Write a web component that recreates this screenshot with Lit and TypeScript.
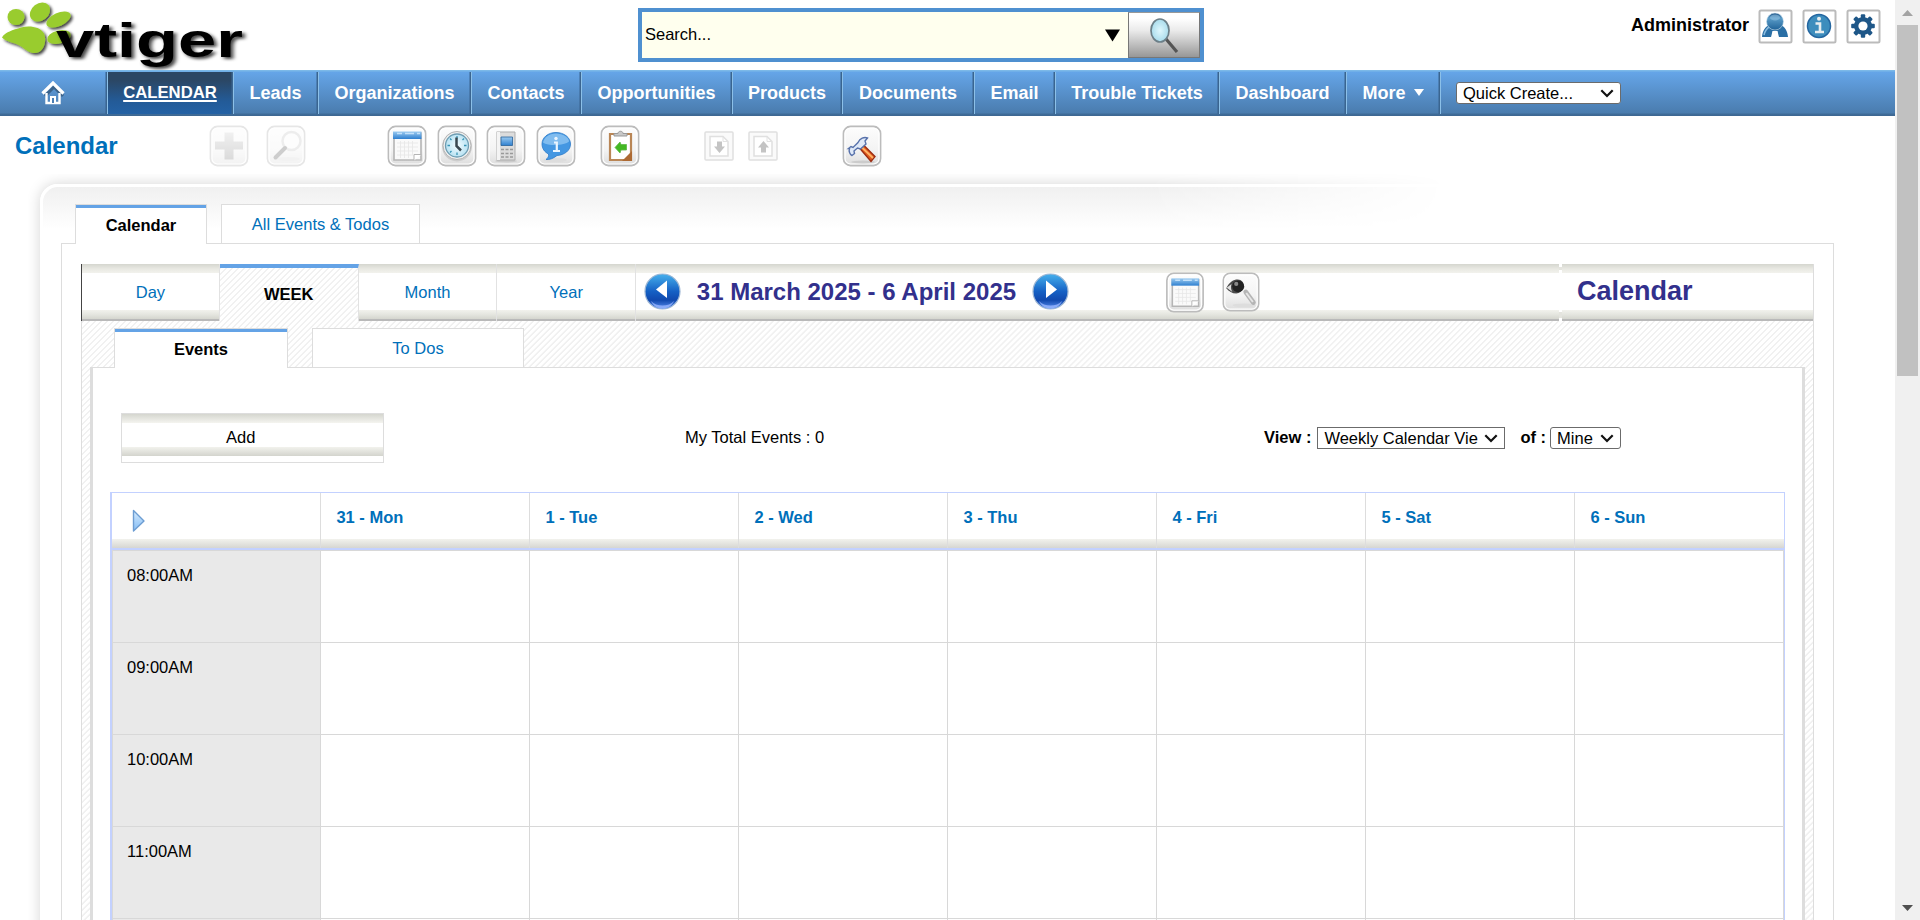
import { LitElement, html, css, svg } from "lit";
import { customElement } from "lit/decorators.js";
import { classMap } from "lit/directives/class-map.js";

const MODULES: [string, number][] = [
  ["CALENDAR", 126],
  ["Leads", 85],
  ["Organizations", 153],
  ["Contacts", 110],
  ["Opportunities", 151],
  ["Products", 110],
  ["Documents", 132],
  ["Email", 81],
  ["Trouble Tickets", 164],
  ["Dashboard", 127],
  ["More", 94],
];
const DAYS = ["31 - Mon", "1 - Tue", "2 - Wed", "3 - Thu", "4 - Fri", "5 - Sat", "6 - Sun"];
const HOURS = ["08:00AM", "09:00AM", "10:00AM", "11:00AM", ""];

const chevron = html`<svg class="chev" width="14" height="9" viewBox="0 0 14 9"><path d="M1.3 1.3L7 7l5.700-5.700" fill="none" stroke="#111" stroke-width="2.200"/></svg>`;

// Rounded glossy tile shared by the toolbar icons; `art` is drawn on a 40x42 grid.
const tile = (art: unknown, w = 40, h = 42) => html`<svg width=${w} height=${h} viewBox="0 0 40 42">
  <defs>
    <linearGradient id="t" x1="0" y1="0" x2="0" y2="1"><stop offset="0" stop-color="#fdfdfd"/><stop offset=".6" stop-color="#f3f3f3"/><stop offset="1" stop-color="#dcdcdc"/></linearGradient>
    <linearGradient id="b" x1="0" y1="0" x2="0" y2="1"><stop offset="0" stop-color="#9ccbf0"/><stop offset="1" stop-color="#2f80d0"/></linearGradient>
    <linearGradient id="g" x1="0" y1="0" x2="0" y2="1"><stop offset="0" stop-color="#d8d8d8"/><stop offset="1" stop-color="#9c9c9c"/></linearGradient>
    <radialGradient id="c"><stop offset="0" stop-color="#f4fcff"/><stop offset="1" stop-color="#b8e2f2"/></radialGradient>
  </defs>
  <rect x="1.500" y="1.500" width="37" height="39" rx="7" fill="url(#t)" stroke="#bcbcbc" stroke-width="1.800"/>
  <rect x="3" y="3" width="34" height="36" rx="5.500" fill="none" stroke="#fff" stroke-width="1.200"/>
  ${art}</svg>`;

const plusArt = svg`<path d="M15.500 7.500h9v9h9.500v8h-9.500v10h-9v-10H6v-8h9.500z" fill="url(#g)"/>`;
const searchArt = svg`<ellipse cx="22" cy="34" rx="12" ry="2" fill="#ddd"/><circle cx="25.500" cy="16" r="9" fill="#fafafa" stroke="#cfcfcf" stroke-width="2.500"/><path d="M19 23L9.500 32.500" stroke="#777" stroke-width="4" stroke-linecap="round"/>`;
const calArt = svg`<path d="M7 8h27v27H7z" fill="#fafafa" stroke="#b5b5b5" stroke-width="1.600"/><path d="M6 6.500h28.500V14H6z" fill="url(#b)"/><path d="M10 8.500h5m3 0h9m3 0h3" stroke="#c3e1fa" stroke-width="1.500"/><path d="M10 18h21m-21 4h21m-21 4h21m-21 4h16M13.500 16v17m4-17v17m4-17v17m4-17v14" stroke="#e6e6e6" stroke-width=".8"/><path d="M27 35.500v-6h7.500" fill="#fff" stroke="#b5b5b5"/>`;
const clockArt = svg`<circle cx="20" cy="21.500" r="15" fill="#cdcdcd"/><circle cx="20" cy="20.500" r="14" fill="#efefef" stroke="#b5b5b5"/><circle cx="20" cy="20.500" r="11.500" fill="url(#c)" stroke="#6e9db2" stroke-width="1.300"/><path d="M20 11v2.500m0 14V30M10.500 20.500H13m14 0h2.500M13 13.500l1.500 1.500M13 27.500l1.500-1.500M27 13.500L25.500 15" stroke="#3894b5" stroke-width="1.300"/><path d="M19.500 12.500v8.500l4.500 4.500" fill="none" stroke="#3a4850" stroke-width="2.500"/>`;
const phoneArt = svg`<ellipse cx="20" cy="36" rx="11" ry="1.500" fill="#ccc"/><path d="M10.500 7h18.500v28h-18.500z" fill="#dcdcdc" stroke="#adadad"/><path d="M10.500 7h3.500v28h-3.500z" fill="#f4f4f4"/><path d="M15 12h11.500v8.500H15z" fill="url(#b)" stroke="#2a6299" stroke-width=".8"/><path d="M15 24.500h3m1.500 0h3m1.500 0h3M15 28.500h3m1.500 0h3m1.500 0h3M15 32h3m1.500 0h3m1.500 0h3" stroke="#999" stroke-width="1.500"/>`;
const chatArt = svg`<ellipse cx="19" cy="35" rx="12" ry="2" fill="#ddd"/><path d="M20 7.500c8 0 14.500 5 14.500 11.500S28.500 30 21 30.500c-3.500 3-8 4.500-11 4 2-1.500 3-3 2.500-5.500C8.500 27 6 23.500 6 19 6 12.500 12 7.500 20 7.500z" fill="#4497e2" stroke="#2a79c8" stroke-width=".8"/><path d="M20 8.500c7 0 13 4 13 8-4 4-20 5-26 1 1-5 6-9 13-9z" fill="#a9d5f8" opacity=".6"/><path d="M18 17.500h2.800v8.500m-3.800 0h7" fill="none" stroke="#eaf5ff" stroke-width="2.200"/><circle cx="20" cy="13.500" r="1.700" fill="#eaf5ff"/>`;
const clipArt = svg`<path d="M10 9h21v26H10z" fill="#fff" stroke="#b98656" stroke-width="2.200"/><path d="M22 36l10-10v10z" fill="#ad6a34"/><path d="M14 11V8.500h4c0-3 5-3 5 0h4V11z" fill="#c8c8c8" stroke="#999"/><path d="M15 22.500l5-5.500 1 2.500h5.500v5.500H21l-1 3z" fill="#43b822" stroke="#5fb84a" stroke-width=".8"/>`;
const hammerArt = svg`<ellipse cx="21" cy="37" rx="12" ry="1.500" fill="#ccc"/><path d="M17.500 23l3.500-3.500L33 31.500 29 36.500z" fill="#df5a1e" stroke="#9b2c12" stroke-width="1.400"/><path d="M20 22.500L31 33" stroke="#ffb468" stroke-width="1.800"/><path d="M6.500 23.500l2.500-2 2 1 5-5c2-4 6-6 9.500-4.500L23 16l1 3-5.500 5-3-1-3.500 3 .5 2.500-2.500 2c-2-1-3.500-4-2.500-7z" fill="#dfe9f8" stroke="#5872ab" stroke-width="1.400"/>`;
const eyeArt = svg`<ellipse cx="23" cy="35" rx="12" ry="2" fill="#ddd"/><path d="M25 21l8 11" stroke="#b5b5b5" stroke-width="5" stroke-linecap="round"/><path d="M25.500 22l7 9.500" stroke="#e6e6e6" stroke-width="2"/><path d="M4.500 17C8 10.500 12 8 16.500 8s6 3 7 8c-3 4.500-5 6.500-8.500 6.500-4.500 0-7.500-2-10.500-5.500z" fill="#4a4a4a"/><path d="M5 16.500l5-4c-1 3-.5 6 1 8.500z" fill="#ddd"/><circle cx="17" cy="15" r="6.200" fill="#222"/><circle cx="15" cy="12.500" r="2.200" fill="#888"/>`;

const fileArt = (up: boolean) => html`<svg width="30" height="30" viewBox="0 0 30 30"><rect x="1" y="1" width="28" height="28" rx="1" fill="#fafafa" stroke="#e0e0e0" stroke-width="1.500"/><path d="M6 5.500h13l5 5V25H6z" fill="#fff" stroke="#e0e0e0" stroke-width="1.500"/><path d="M19 5.500v5h5" fill="none" stroke="#e2e2e2"/><path transform=${up ? "rotate(180 15.5 16)" : ""} d="M13 10.500h5v5h3L15.500 22 10 15.500h3z" fill="#c4c4c4"/></svg>`;

const arrowBall = (next: boolean) => html`<svg width="37" height="39" viewBox="0 0 37 39"><defs><linearGradient id="ab" x1="0" y1="0" x2="0" y2="1"><stop offset="0" stop-color="#46b0ec"/><stop offset=".5" stop-color="#1560c4"/><stop offset=".75" stop-color="#1149ae"/><stop offset="1" stop-color="#5a8ff0"/></linearGradient></defs><circle cx="18.500" cy="19.500" r="17.500" fill="url(#ab)" stroke="#9db6d4" stroke-width="1.200"/><path d="M7 29c5 6 18 6 23 0-4 10-19 10-23 0z" fill="#9bb8ff" opacity=".8"/><path transform=${next ? "translate(37 0) scale(-1 1)" : ""} d="M12 17.500L23 8.500v17.500z" fill="#fff"/></svg>`;

@customElement("app-root")
export class AppRoot extends LitElement {
  static styles = css`
    :host { display: flex; height: 920px; overflow: hidden; background: #fff; color: #000; font: 16.5px "Liberation Sans", Arial, sans-serif; }
    * { box-sizing: border-box; }
    svg { display: block; flex: none; }
    .page { width: 1895px; height: 920px; overflow: hidden; }
    .scroll { width: 25px; background: #f0f0f0; display: flex; flex-direction: column; align-items: center; justify-content: space-between; padding: 10px 0 9px; }
    .thumb { width: 21px; height: 351px; background: #c1c1c1; margin: 9px 0 auto; }
    header { display: flex; height: 70px; align-items: flex-start; }
    .logo { width: 638px; }
    .search { display: flex; width: 566px; height: 54px; border: 4px solid #4f90d0; margin-top: 8px; }
    .field { flex: 1; background: #ffffee; display: flex; align-items: center; justify-content: space-between; padding: 0 8px 1px 3px; }
    .tri { margin-top: 2px; }
    .field span { margin-bottom: 1px; }
    .go { width: 72px; border: 1px solid #777; border-top-color: #999; background: linear-gradient(#fff 12%, #eaeaea 40%, #979797); padding: 4px 0 0 20px; }
    .user { margin-left: auto; display: flex; padding: 9px 14px 0 0; font: bold 18px "Liberation Sans", Arial, sans-serif; }
    .user span { margin: 6px 9px 0 0; line-height: 21px; }
    .user svg + svg { margin-left: 9px; }
    nav { display: flex; height: 46px; padding-top: 2px; background: linear-gradient(#7cb9e8 0 1px, #65a5e8 2px, #4a7cae 43px, #3f6c98 44px, #3e6791); color: #fff; font: bold 18px "Liberation Sans", Arial, sans-serif; }
    .cell { height: 42px; border-right: 1px solid #8cc0e8; box-shadow: inset -1.500px 0 0 #3a6590; display: flex; align-items: center; justify-content: center; padding-right: 1px; }
    .home { width: 108px; padding-right: 2px; }
    .item.on { height: 42px; background: linear-gradient(#2b4765 20%, #235b98 70%, #2462a5); font-size: 16.7px; text-decoration: underline; text-decoration-thickness: 1.5px; text-underline-offset: 2px; }
    .more { margin: 0 0 1px 8px; }
    .select { display: flex; align-items: center; justify-content: space-between; background: #fff; color: #000; border: 1px solid #6b6b6b; height: 22px; padding: 0 6px 0 6px; font: 16.5px "Liberation Sans", Arial, sans-serif; white-space: nowrap; }
    .quick { width: 165px; border-radius: 3px; margin: 10px 0 0 15px; }
    .tools { display: flex; height: 58px; padding: 9px 0 0 15px; }
    .tools h1 { font-size: 24px; line-height: 41px; margin: 0; width: 194px; }
    h1 { color: #0070ba; }
    .faint { opacity: .36; margin-right: 17px; }
    .g1 { margin-left: 64px; display: flex; gap: 9.600px; }
    .g2 { margin-left: 24px; }
    .g3 { margin: 6px 0 0 64px; display: flex; gap: 14px; }
    .g4 { margin-left: 64px; }
    .frame { margin-left: 28px; height: 746px; padding: 10px 0 0 12px; display: grid; }
    .glow, .inner { grid-area: 1 / 1; height: 750px; }
    .glow { border: solid #fff; border-width: 3px 0 0 3px; border-radius: 18px 0 0 0; background: linear-gradient(#f0f0f0, #fff 42px); box-shadow: 0 0 14px rgba(0, 0, 0, .17); mask: linear-gradient(90deg, #000 60%, transparent 76%) -12px -10px / calc(100% + 12px) 800px no-repeat; mask-clip: no-clip; }
    .inner { padding: 20px 61px 0 21px; z-index: 1; }
    .tabs { display: flex; height: 39px; }
    .tab { height: 39px; border: 1px solid #ddd; border-bottom: 0; background: #fff; display: flex; justify-content: center; padding-top: 10px; line-height: 19px; color: #0070ba; }
    .tab.on { color: #000; font-weight: bold; box-shadow: inset 0 3px #64a3e6; height: 40px; padding-top: 11px; z-index: 1; }
    .outer { border: 1px solid #ddd; border-bottom: 0; background: #fff; height: 680px; padding: 20px 19px 0; }
    .tabs.top { padding-left: 14px; gap: 14px; }
    .t1 { width: 132px; } .t2 { width: 199px; }
    .hatch { height: 660px; border: solid #ddd; border-width: 0 1px; background: repeating-linear-gradient(135deg, #fff 0 2.200px, #f1f1f1 2.800px 3.800px, #fff 4.240px); }
    .bar { display: flex; height: 57px; }
    .band { background: linear-gradient(#d5d6cf, #e9e9e3 5px, #f2f2ed 9px, #fff 9px 46px, #f2f2ed 46px, #e6e7e1 50px, #d3d4cd 55.500px, #b9b9b9 55.500px); display: flex; }
    .view { width: 138.8px; justify-content: center; padding-top: 18px; line-height: 20px; color: #0070ba; border-right: 1px solid #e2e2e2; }
    .first { margin-left: -1px; border-left: 1px solid #444; }
    .view.on { background: none; border-top: 4px solid #64a3e6; font-weight: bold; color: #000; padding-top: 16px; }
    .date { width: 922.8px; padding: 8px 0 0 7.6px; }
    .date b { font-size: 24px; line-height: 40px; color: #32308c; width: 319px; margin: 0 16px; white-space: nowrap; }
    .gap { width: 3px; background: linear-gradient(#fff 3px, #e4e4de 3px 6px, #fff 6px 48px, #e4e4de 48px 54px, #fff 54px); }
    .side { flex: 1; padding: 8px 0 0 15px; font: bold 27px/38px "Liberation Sans", Arial, sans-serif; color: #32308c; }
    .sub { padding: 0 0 0 32px; margin-top: 7px; gap: 24px; }
    .t3 { width: 174px; } .t4 { width: 212px; }
    .panel { margin: 0 8px; border: solid #ddd; border-width: 1px 3px 0; background: #fff; height: 553px; padding: 45px 17px 0; }
    .row { display: flex; height: 79px; align-items: flex-start; padding-left: 11px; }
    .add { width: 263px; height: 50px; border: 1px solid #ddd; padding: 14px 0 0 104px; line-height: 19px; background: linear-gradient(#d5d6cf, #f4f4ef 9px, #fff 9px 33px, #f2f2ed 33px, #d3d4cd 42px, #fff 42px); }
    .total { margin: 14px 0 0 301px; line-height: 20px; width: 579px; }
    .row b { margin-top: 14px; line-height: 20px; }
    .sel1 { width: 188px; margin: 14px 15px 0 6px; }
    .sel2 { width: 71px; margin: 14px 0 0 4px; border-radius: 3px; }
    .grid { border: 1px solid #c3d1ff; border-width: 1px 1px 0 2px; height: 430px; overflow: hidden; }
    .heads, .slots { display: grid; grid-template-columns: repeat(8, 1fr); }
    .heads { height: 57px; border-bottom: 2px solid #c3d1ff; background: linear-gradient(#fff 46px, #f2f2ed 46px, #d6d6d2 55px); color: #0070ba; font-weight: bold; }
    .heads > div { border-right: 1px solid #ddd; padding: 15px 0 0 15.4px; line-height: 19px; }
    .heads > div:last-child { border-right-color: transparent; }
    .slots > div { height: 92px; border: solid #d8d8d8; border-width: 1px 1px 0 0; padding: 15px 0 0 14px; line-height: 19px; }
    .slots > .hour { background: #e9e9e9; border-left: 1px solid #d8d8d8; }
  `;

  private logo() {
    return html`<svg class="logo" width="638" height="70" viewBox="0 0 638 70">
      <defs><filter id="s" x="-10%" y="-10%" width="125%" height="130%"><feDropShadow dx="2" dy="2" stdDeviation="1.500" flood-color="#000" flood-opacity=".75"/></filter></defs>
      <g fill="#99cc2e" filter="url(#s)">
        <ellipse cx="16" cy="17" rx="8.500" ry="8"/>
        <ellipse cx="40" cy="12" rx="11" ry="8.500" transform="rotate(-38 40 12)"/>
        <ellipse cx="58.500" cy="19.500" rx="13" ry="6.500" transform="rotate(-25 58.500 19.500)"/>
        <ellipse cx="59" cy="37" rx="12" ry="6.500" transform="rotate(-14 59 37)"/>
        <path d="M2 37.500C5 32 13 30 21 27.500c8-2 19-1 23 6 3 7 0 16-5 18.500-6 3-12-1-17-5-6-5-15-4-20-9.500z"/>
      </g>
      <text x="0" y="0" transform="translate(56 56.500) scale(1.445 1)" font-family="Liberation Sans, Arial, sans-serif" font-weight="bold" font-size="47.500" filter="url(#s)">vtiger</text>
    </svg>`;
  }

  private userIcon(art: unknown) {
    return html`<svg width="35" height="35" viewBox="0 0 35 35"><defs><linearGradient id="u" x1="0" y1="0" x2="0" y2="1"><stop offset="0" stop-color="#1c4f82"/><stop offset=".3" stop-color="#5a9cc8"/><stop offset="1" stop-color="#1f6298"/></linearGradient></defs><rect x="1.500" y="1.500" width="32" height="32" rx="1.500" fill="#fff" stroke="#bbb" stroke-width="2"/>${art}</svg>`;
  }

  render() {
    return html`
      <div class="page">
        <header>
          ${this.logo()}
          <div class="search">
            <div class="field"><span>Search...</span><svg class="tri" width="15" height="13" viewBox="0 0 15 13"><path d="M0 .5h15L7.500 12.500z"/></svg></div>
            <div class="go"><svg width="32" height="38" viewBox="0 0 32 38"><defs><radialGradient id="l"><stop offset="0" stop-color="#dff7fd"/><stop offset="1" stop-color="#a9dcec"/></radialGradient></defs><path d="M17 22l11 13" stroke="#555" stroke-width="3.200"/><ellipse cx="11" cy="13.500" rx="9" ry="11.500" fill="url(#l)" stroke="#6c7f88" stroke-width="1.700"/></svg></div>
          </div>
          <div class="user">
            <span>Administrator</span>
            ${this.userIcon(svg`<path d="M4 28c.5-6 3-10.500 8-12.500h10c5 2 7.500 6.500 8 12.500h-9.500L19 22h-4l-1.500 6z" fill="#2a6fa5"/><path d="M6 26c1-4 3-7 6-8.500" fill="none" stroke="#8abce0" stroke-width="1.500"/><circle cx="17" cy="12.500" r="8.500" fill="url(#u)" stroke="#cfe2ef" stroke-width=".6"/><ellipse cx="17" cy="8.500" rx="5" ry="3" fill="#9bc8e6" opacity=".5"/><path d="M14.500 22h5l1.500 6.500h-8z" fill="#fff"/>`)}
            ${this.userIcon(svg`<circle cx="17" cy="17" r="11.500" fill="#3d8dbd" stroke="#2466a0" stroke-width="1.500"/><path d="M13.500 14.500h4.500V23m-5 0h9" fill="none" stroke="#e7edf0" stroke-width="2.600"/><circle cx="17" cy="9.800" r="2" fill="#e7edf0"/>`)}
            ${this.userIcon(svg`<g fill="#1e5788">${[0, 45, 90, 135].map((a) => svg`<rect x="14.800" y="5.200" width="4.400" height="23.600" rx="1" transform="rotate(${a} 17 17)"/>`)}<circle cx="17" cy="17" r="9"/></g><circle cx="17" cy="17" r="4.600" fill="#fff"/>`)}
          </div>
        </header>
        <nav>
          <div class="cell home"><svg width="24" height="24" viewBox="0 0 24 24"><path d="M3 13L12 4l9 9" fill="none" stroke="#3b6289" stroke-width="3" transform="translate(1 2)"/><path d="M5.500 12v10h13V12" fill="none" stroke="#fff" stroke-width="2.400"/><path d="M10 22v-6h4v6" fill="#4b7eb3" stroke="#fff" stroke-width="2"/><path d="M1.500 12.500L12 2l10.500 10.500" fill="none" stroke="#fff" stroke-width="3.200"/></svg></div>
          ${MODULES.map(([m, w]) => html`<div class=${classMap({ cell: true, item: true, on: m === "CALENDAR" })} style="width:${w}px">${m}${m === "More" ? html`<svg class="more" width="10" height="7" viewBox="0 0 10 7"><path d="M0 0h10L5 7z" fill="#fff"/></svg>` : ""}</div>`)}
          <div class="select quick">Quick Create...${chevron}</div>
        </nav>
        <div class="tools">
          <h1>Calendar</h1>
          <div class="faint">${tile(plusArt)}</div><div class="faint">${tile(searchArt)}</div>
          <div class="g1">${tile(calArt)}${tile(clockArt)}${tile(phoneArt)}${tile(chatArt)}</div>
          <div class="g2">${tile(clipArt)}</div>
          <div class="g3">${fileArt(false)}${fileArt(true)}</div>
          <div class="g4">${tile(hammerArt)}</div>
        </div>
        <div class="frame"><div class="glow"></div><div class="inner">
          <div class="tabs top"><div class="tab on t1">Calendar</div><div class="tab t2">All Events &amp; Todos</div></div>
          <div class="outer"><div class="hatch">
            <div class="bar">
              <div class="band view first">Day</div><div class="band view on">WEEK</div><div class="band view">Month</div><div class="band view">Year</div>
              <div class="band date">${arrowBall(false)}<b>31 March 2025 - 6 April 2025</b>${arrowBall(true)}<svg width="96" height="1"></svg>${tile(calArt, 40, 41)}<svg width="16" height="1"></svg>${tile(eyeArt, 40, 40)}</div>
              <div class="gap"></div>
              <div class="band side">Calendar</div>
            </div>
            <div class="tabs sub"><div class="tab on t3">Events</div><div class="tab t4">To Dos</div></div>
            <div class="panel">
              <div class="row">
                <div class="add">Add</div>
                <div class="total">My Total Events : 0</div>
                <b>View :</b><div class="select sel1">Weekly Calendar Vie${chevron}</div>
                <b>of :</b><div class="select sel2">Mine${chevron}</div>
              </div>
              <div class="grid">
                <div class="heads">
                  <div><svg width="24" height="26" viewBox="0 0 24 26"><defs><linearGradient id="p" x1="0" y1="0" x2="0" y2="1"><stop offset="0" stop-color="#d5eafd"/><stop offset="1" stop-color="#84bdf5"/></linearGradient></defs><path d="M6.500 2.500L17 13 6.500 23z" fill="url(#p)" stroke="#6d9dd2" stroke-width="1.400" stroke-linejoin="round"/></svg></div>
                  ${DAYS.map((d) => html`<div>${d}</div>`)}
                </div>
                <div class="slots">${HOURS.map((h) => html`<div class="hour">${h}</div>${DAYS.map(() => html`<div></div>`)}`)}</div>
              </div>
            </div>
          </div></div>
        </div></div>
      </div>
      <div class="scroll">
        <svg width="11" height="6" viewBox="0 0 11 6"><path d="M0 6L5.500 0 11 6z" fill="#a3a3a3"/></svg>
        <div class="thumb"></div>
        <svg width="11" height="6" viewBox="0 0 11 6"><path d="M0 0l5.500 6L11 0z" fill="#505050"/></svg>
      </div>`;
  }
}
